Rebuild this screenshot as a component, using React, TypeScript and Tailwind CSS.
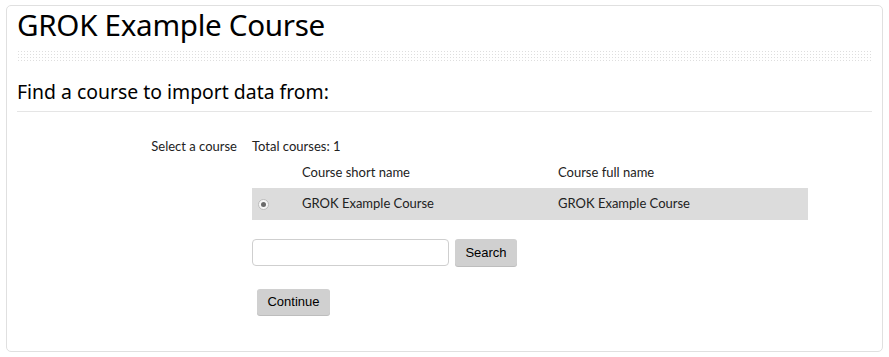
import React from "react";

const dots =
  "bg-[radial-gradient(circle,#dedede_0.8px,transparent_0.9px)] bg-[length:3px_3px]";

export default function App() {
  return (
    <div className="h-[357px] w-[889px] bg-white pl-[6px] pr-[6px] pt-[5px] font-['Lato',sans-serif] text-[#222]">
      <div className="h-[347px] rounded-[5px] border border-[#e0e0e0] px-[10px] pt-[1px]">
        <h1 className="font-['Noto_Sans',sans-serif] text-[29.6px] leading-[36px] tracking-[-0.3px] text-black">
          GROK Example Course
        </h1>
        <div className={`mt-[7px] h-[11px] ${dots}`} />
        <h2 className="mt-[19px] border-b border-[#e5e5e5] pb-[7px] font-['Noto_Sans',sans-serif] text-[19.4px] leading-[24px] text-black">
          Find a course to import data from:
        </h2>
        <div className="mt-[25px] flex text-[13px]">
          <div className="w-[235px] pr-[15px] text-right leading-[18px]">Select a course</div>
          <div>
            <div className="leading-[18px]">Total courses: 1</div>
            <div className="mt-[8px] flex leading-[18px]">
              <div className="w-[50px]" />
              <div className="w-[256px]">Course short name</div>
              <div className="w-[250px]">Course full name</div>
            </div>
            <div className="mt-[7px] flex h-[32px] w-[556px] items-center bg-[#dcdcdc]">
              <div className="flex w-[50px] pl-[6px]">
                <span className="flex h-[11px] w-[11px] items-center justify-center rounded-full border border-[#bcbcbc] bg-[#f6f6f6]">
                  <span className="h-[5px] w-[5px] rounded-full bg-[#6a6a6a]" />
                </span>
              </div>
              <div className="w-[256px]">GROK Example Course</div>
              <div className="w-[250px]">GROK Example Course</div>
            </div>
            <div className="mt-[19px] flex items-center gap-[6px]">
              <input
                type="text"
                className="h-[27px] w-[197px] rounded-[4px] border border-[#cfcfcf] bg-white px-2 outline-none"
              />
              <button className="h-[27px] w-[62px] rounded-[3px] bg-[#d0d0d0] font-['Liberation_Sans',sans-serif] text-[13px] text-black shadow-[0_1px_0_#bdbdbd]">
                Search
              </button>
            </div>
            <button className="ml-[5px] mt-[23px] h-[26px] w-[73px] rounded-[3px] bg-[#d0d0d0] font-['Liberation_Sans',sans-serif] text-[13px] text-black shadow-[0_1px_0_#bdbdbd]">
              Continue
            </button>
          </div>
        </div>
      </div>
    </div>
  );
}
